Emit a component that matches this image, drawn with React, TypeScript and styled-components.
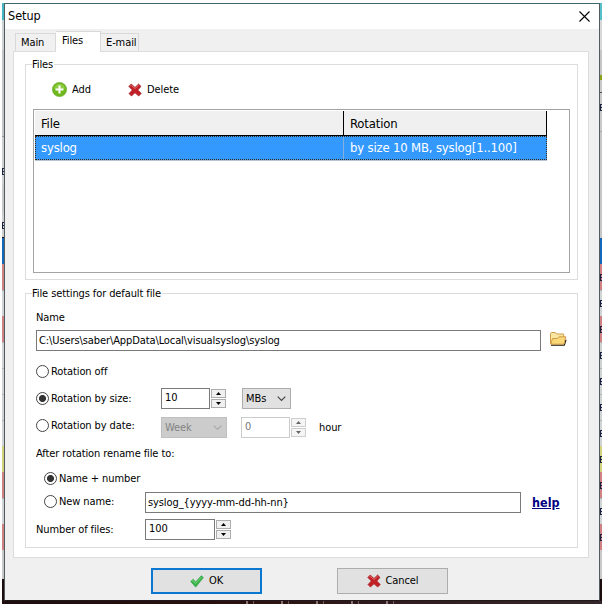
import React from "react";
import styled, { createGlobalStyle } from "styled-components";

const Global = createGlobalStyle`
  * { box-sizing: border-box; }
  body { margin: 0; background: #fff; overflow: hidden; }
`;

const Screen = styled.div`
  width: 602px;
  height: 605px;
  padding: 3px 0 1px 2px;
  display: grid;
  grid-template-columns: 2px 596px 2px;
  grid-template-rows: 598px 3px;
  background: #fff;
  font: 11px/14px "DejaVu Sans Condensed", "DejaVu Sans", "Noto Sans", sans-serif;
  font-stretch: condensed;
  color: #000;
  white-space: nowrap;
`;

const Edge = styled.div`
  display: flex;
  flex-direction: column;
  overflow: hidden;
`;

const Strip = styled.div<{ $h: number; $c: string }>`
  flex: 0 0 ${(p) => p.$h}px;
  background: ${(p) => p.$c};
  display: flex;
  flex-direction: column;
  justify-content: center;
`;

const Mark = styled.div`
  height: 7px;
  border: solid #1c2340;
  border-width: 1px 0 1px 1px;
  background: linear-gradient(transparent 2px, #1c2340 2px, #1c2340 3px, transparent 3px);
`;

const Desktop = styled.div`
  grid-column: 1 / 4;
  background:
    repeating-linear-gradient(90deg, transparent 0 27px, rgba(205, 190, 190, 0.55) 27px 29px, transparent 29px 34px, rgba(205, 190, 190, 0.4) 34px 35px) 217px 0 / 190px 3px no-repeat,
    linear-gradient(90deg, #1d0d0e, #2b1010 40%, #30191b 60%, #33272a);
`;

const Window = styled.div`
  border: 1px solid #545b5e;
  border-top-color: #3f6670;
  border-bottom-color: #20181a;
  background: #f0f0f0;
  display: flex;
  flex-direction: column;
`;

const TitleBar = styled.div`
  height: 25px;
  background: #fff;
  display: flex;
  align-items: center;
  justify-content: space-between;
  padding: 0 9px 1px 3px;
`;

const Text = styled.span<{ $size?: number; $ls?: number; $c?: string }>`
  font-size: ${(p) => p.$size || 11}px;
  letter-spacing: ${(p) => (p.$ls === undefined ? -0.1 : p.$ls)}px;
  color: ${(p) => p.$c || "#000"};
`;

const Tabs = styled.div`
  height: 22px;
  padding: 0 0 0 10px;
  display: flex;
  align-items: flex-end;
`;

const Tab = styled.div<{ $w: number; $active?: boolean }>`
  width: ${(p) => p.$w}px;
  height: ${(p) => (p.$active ? 21 : 18)}px;
  padding: ${(p) => (p.$active ? "2px 0 0 6px" : "2px 0 0 5px")};
  margin-bottom: ${(p) => (p.$active ? -1 : 0)}px;
  z-index: ${(p) => (p.$active ? 1 : 0)};
  background: ${(p) => (p.$active ? "#fff" : "#f0f0f0")};
  border: 1px solid #d9d9d9;
  border-bottom: 0;
  & + & { border-left-width: ${(p) => (p.$active ? 1 : 0)}px; }
`;

const TabPage = styled.div`
  height: 507px;
  margin: 0 10px 0 8px;
  padding: 12px 10px 0 11px;
  background: #fff;
  border: 1px solid #dcdcdc;
`;

const Group = styled.section<{ $h: number }>`
  height: ${(p) => p.$h}px;
  border: 1px solid #dcdcdc;
  margin-bottom: 13px;
  padding: 0 7px;
  display: flex;
  flex-direction: column;
`;

const Legend = styled.div`
  align-self: flex-start;
  height: 14px;
  margin: -7px 0 0 -1px;
  padding: 0 1px 0 0;
  background: #fff;
`;

const Toolbar = styled.div`
  display: flex;
  height: 37px;
  align-items: center;
  padding: 0 0 2px 19px;
`;

const ToolButton = styled.div<{ $w: number }>`
  display: flex;
  align-items: center;
  gap: 5px;
  width: ${(p) => p.$w}px;
`;

const Grid = styled.div`
  height: 164px;
  border: 1px solid #a3a3a3;
  width: 537px;
  padding: 1px 0 0 1px;
`;

const GridHead = styled.div`
  display: grid;
  grid-template-columns: 309px 203px;
  height: 25px;
  width: 512px;
`;

const HeadCell = styled.div`
  background: #f0f0f0;
  border-right: 1px solid #000;
  border-bottom: 1px solid #000;
  padding: 5px 0 0 6px;
  line-height: 16px;
`;

const GridRow = styled.div`
  display: grid;
  grid-template-columns: 308px 202px;
  width: 512px;
  height: 24px;
  background: #3399ff;
  border: 1px dotted #3c2a14;
  box-shadow: 0 1px 0 #b8c4d2;
`;

const GridCell = styled.div`
  padding: 3px 0 0 5px;
  line-height: 16px;
  & + & { padding-left: 6px; }
  &:first-child { border-right: 1px solid #86aede; }
`;

const Row = styled.div<{ $h: number; $pl?: number; $top?: number }>`
  display: flex;
  align-items: center;
  height: ${(p) => p.$h}px;
  padding-left: ${(p) => (p.$pl === undefined ? 3 : p.$pl)}px;
  margin-top: ${(p) => p.$top || 0}px;
`;

const Field = styled.div<{ $w: number; $off?: boolean; $raise?: boolean }>`
  width: ${(p) => p.$w}px;
  height: 21px;
  border: 1px solid ${(p) => (p.$off ? "#cccccc" : "#7a7a7a")};
  background: #fff;
  padding: ${(p) => (p.$raise ? "2px 0 0 3px" : "3px 0 0 2px")};
`;

const RadioLabel = styled.div<{ $w: number; $up?: number }>`
  width: ${(p) => p.$w}px;
  display: flex;
  align-items: center;
  gap: 2px;
  margin-bottom: ${(p) => p.$up || 0}px;
`;

const Dot = styled.span<{ $on?: boolean }>`
  width: 13px;
  height: 13px;
  flex: none;
  border: 1px solid #444;
  border-radius: 50%;
  background: ${(p) => (p.$on ? "radial-gradient(circle, #333 3.1px, #fff 3.9px)" : "#fff")};
`;

const SpinBox = styled.div<{ $off?: boolean }>`
  width: 15px;
  margin-left: 1px;
  display: grid;
  gap: 1px;
  opacity: ${(p) => (p.$off ? 0.6 : 1)};
`;

const SpinBtn = styled.div`
  height: 9px;
  background: #f0f0f0;
  border: 1px solid #acacac;
  display: flex;
  align-items: center;
  justify-content: center;
`;

const Combo = styled.div<{ $w: number; $off?: boolean; $ml?: number }>`
  width: ${(p) => p.$w}px;
  height: 21px;
  margin-left: ${(p) => p.$ml || 0}px;
  border: 1px solid ${(p) => (p.$off ? "#bfbfbf" : "#adadad")};
  background: ${(p) => (p.$off ? "#cccccc" : "#e1e1e1")};
  display: flex;
  align-items: center;
  justify-content: space-between;
  padding: 0 4px 0 3px;
`;

const Spacer = styled.span<{ $w: number }>`
  width: ${(p) => p.$w}px;
`;

const FolderButton = styled.span`
  display: flex;
  margin: 0 0 4px 9px;
`;

const Help = styled.a`
  margin: 0 0 0 11px;
  font-size: 12.5px;
  font-weight: bold;
  color: #000080;
  text-decoration: underline;
`;

const Buttons = styled.div`
  display: flex;
  gap: 75px;
  padding: 10px 0 0 146px;
`;

const Button = styled.button<{ $primary?: boolean }>`
  width: 111px;
  height: 26px;
  border: ${(p) => (p.$primary ? "2px solid #0a78d1" : "1px solid #adadad")};
  background: #e1e1e1;
  font: inherit;
  padding: 0;
  display: flex;
  align-items: center;
  justify-content: center;
  gap: 5px;
`;

const Cross = () => (
  <svg width="14" height="14" viewBox="0 0 14 14">
    <path d="M3.2 1 L7 4.4 L10.6 1 L13 3.4 L9.8 7 L13.3 10.4 L10.7 13 L7 9.8 L3.4 13 L1 10.6 L4.3 7 L0.8 3.4Z" fill="#c22026" stroke="#a52025" strokeWidth=".7" strokeLinejoin="round" />
    <path d="M2.2 3.2 L3.3 2.3 L7 5.6 L10.6 2.3" fill="none" stroke="#dc6a68" strokeWidth="1" />
  </svg>
);

const Plus = () => (
  <svg width="15" height="15" viewBox="0 0 15 15">
    <circle cx="7.5" cy="7.5" r="7.1" fill="#6fb91f" stroke="#5da518" strokeWidth=".6" />
    <path d="M2 6.5a5.6 5.6 0 0 1 11 0q-5.500 2-11 0Z" fill="#8dcc42" />
    <path d="M7.500 3.500v8M3.500 7.500h8" stroke="#fff" strokeWidth="2.100" />
  </svg>
);

const Check = () => (
  <svg width="14" height="13" viewBox="0 0 14 13">
    <path d="M.8 6.500 L3.200 4.200 L5.500 7.100 L11.300 .8 L13.300 2.600 L5.700 12.100Z" fill="#3bb54a" stroke="#259a39" strokeWidth=".7" strokeLinejoin="round" />
    <path d="M2 6.400 L3.100 5.400 L5.500 8.400 L11.400 2" fill="none" stroke="#7dd884" strokeWidth=".9" />
  </svg>
);

const Folder = () => (
  <svg width="17" height="14" viewBox="0 0 17 14">
    <path d="M1 13.200h13.200l1.800-5.500" fill="none" stroke="#191507" strokeWidth="1.300" />
    <path d="M.5 12V1.500l.8-1h4l1.200 1.500h7.200v3" fill="#fae6a0" stroke="#cf9c4b" />
    <path d="M.8 12.200L2.500 6.500h5l1.500-1.700h6.800l-1.800 7.400Z" fill="#fbd877" stroke="#cf9c4b" />
  </svg>
);

const Chevron = ({ color }: { color: string }) => (
  <svg width="9" height="6" viewBox="0 0 9 6">
    <path d="M.7 .7 4.500 4.500 8.300 .7" fill="none" stroke={color} strokeWidth="1.200" />
  </svg>
);

const Spinner = ({ off }: { off?: boolean }) => (
  <SpinBox $off={off}>
    <SpinBtn>
      <svg width="5" height="3" viewBox="0 0 5 3"><path d="M0 3 2.500 0 5 3Z" /></svg>
    </SpinBtn>
    <SpinBtn>
      <svg width="5" height="3" viewBox="0 0 5 3"><path d="M0 0 2.500 3 5 0Z" /></svg>
    </SpinBtn>
  </SpinBox>
);

const Radio = ({ on, w, up, children }: { on?: boolean; w: number; up?: number; children: string }) => (
  <RadioLabel $w={w} $up={up}>
    <Dot $on={on} />
    <Text>{children}</Text>
  </RadioLabel>
);

type Band = [number, string, boolean?];
const pink = "#cf8184";
const pale = "linear-gradient(#b0b5b8 1px, #d0d3d4 1px)";
const rows: Band[] = [
  [26, pink, true], [26, pale, true], [26, pink, true], [26, pale, true],
  [26, pale, true], [26, pale, true], [26, pale, true], [26, "#d2d27e", true],
  [26, pink, true], [26, pale, true], [26, pink, true], [29, "#c9c9c9"], [30, "#1d0d0e"],
];
const left: Band[] = [
  [17, "#45b7c4"], [30, "#cdd2d3"], [86, "#c2c6c7"], [1, "#999"], [20, "#cfcfcf"], [28, "#cfcfcf", true],
  [28, "#c8c8c8"], [24, "#cfcfcf", true], [1, "#111"], [26, "#1268ba"],
];
const right: Band[] = [
  [17, "#55c0cb"], [30, "#d8d8d8"], [25, "#c5c5c5"], [5, "#8aa51b"], [12, "#c8c8c8"], [1, "#555"], [10, "#c8c8c8"],
  [8, "#c8c8c8", true], [20, "#c8c8c8"], [1, "#aaa"], [106, "#c6c6c6"], [26, "#1268ba"],
];

const EdgeBands = ({ bands, marks }: { bands: Band[]; marks: boolean }) => (
  <Edge>
    {bands.map(([h, c, m], i) => (
      <Strip key={"a" + i} $h={h} $c={c}>{m && <Mark />}</Strip>
    ))}
    {rows.map(([h, c, m], i) => (
      <Strip key={"b" + i} $h={h} $c={c}>{marks && m && <Mark />}</Strip>
    ))}
  </Edge>
);

export default function App() {
  return (
    <>
      <Global />
      <Screen>
        <EdgeBands bands={left} marks={false} />
        <Window>
          <TitleBar>
            <Text $size={12.5} $ls={0}>Setup</Text>
            <svg width="11" height="11" viewBox="0 0 11 11">
              <path d="M.5 .5l10 10M10.500 .5l-10 10" stroke="#000" strokeWidth="1.100" />
            </svg>
          </TitleBar>
          <Tabs>
            <Tab $w={41}><Text>Main</Text></Tab>
            <Tab $w={45} $active><Text>Files</Text></Tab>
            <Tab $w={38}><Text>E-mail</Text></Tab>
          </Tabs>
          <TabPage>
            <Group $h={216}>
              <Legend><Text>Files</Text></Legend>
              <Toolbar>
                <ToolButton $w={76}><Plus /><Text>Add</Text></ToolButton>
                <ToolButton $w={60}><Cross /><Text>Delete</Text></ToolButton>
              </Toolbar>
              <Grid>
                <GridHead>
                  <HeadCell><Text $size={13} $ls={-0.18}>File</Text></HeadCell>
                  <HeadCell><Text $size={13} $ls={-0.18}>Rotation</Text></HeadCell>
                </GridHead>
                <GridRow>
                  <GridCell><Text $size={13} $ls={-0.18} $c="#fff">syslog</Text></GridCell>
                  <GridCell><Text $size={13} $ls={-0.18} $c="#fff">by size 10 MB, syslog[1..100]</Text></GridCell>
                </GridRow>
              </Grid>
            </Group>
            <Group $h={255}>
              <Legend><Text>File settings for default file</Text></Legend>
              <Row $h={14} $top={10}><Text>Name</Text></Row>
              <Row $h={21} $top={5}>
                <Field $w={505}><Text>C:\Users\saber\AppData\Local\visualsyslog\syslog</Text></Field>
                <FolderButton><Folder /></FolderButton>
              </Row>
              <Row $h={13} $top={14}><Radio w={125}>Rotation off</Radio></Row>
              <Row $h={21} $top={10}>
                <Radio on w={125}>Rotation by size:</Radio>
                <Field $w={49} $raise><Text>10</Text></Field>
                <Spinner />
                <Combo $w={49} $ml={16}><Text>MBs</Text><Chevron color="#444" /></Combo>
              </Row>
              <Row $h={21} $top={8}>
                <Radio w={125} up={4}>Rotation by date:</Radio>
                <Combo $w={66} $off><Text $c="#838383">Week</Text><Chevron color="#aaa" /></Combo>
                <Spacer $w={14} />
                <Field $w={49} $off $raise><Text $c="#777">0</Text></Field>
                <Spinner off />
                <Spacer $w={13} />
                <Text>hour</Text>
              </Row>
              <Row $h={14} $top={9}><Text>After rotation rename file to:</Text></Row>
              <Row $h={13} $top={11} $pl={11}><Radio on w={125}>Name + number</Radio></Row>
              <Row $h={21} $top={7} $pl={11}>
                <Radio w={101} up={2}>New name:</Radio>
                <Field $w={376}><Text>{"syslog_{yyyy-mm-dd-hh-nn}"}</Text></Field>
                <Help>help</Help>
              </Row>
              <Row $h={21} $top={6}>
                <RadioLabel $w={109}><Text>Number of files:</Text></RadioLabel>
                <Field $w={70} $raise><Text>100</Text></Field>
                <Spinner />
              </Row>
            </Group>
          </TabPage>
          <Buttons>
            <Button $primary><Check /><Text>OK</Text></Button>
            <Button><Cross /><Text>Cancel</Text></Button>
          </Buttons>
        </Window>
        <EdgeBands bands={right} marks />
        <Desktop />
      </Screen>
    </>
  );
}
